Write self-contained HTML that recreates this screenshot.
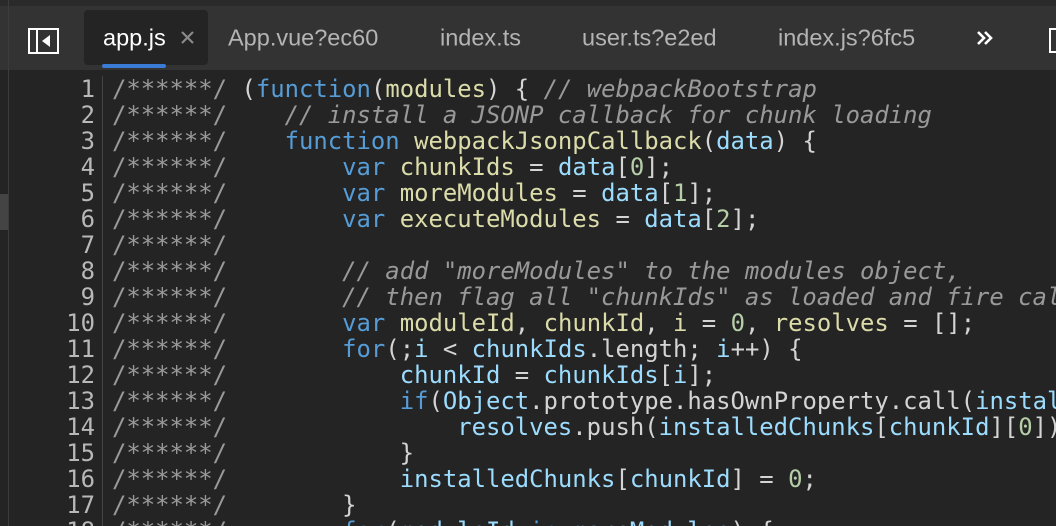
<!DOCTYPE html>
<html style="overflow:hidden;width:1056px;height:526px"><head><meta charset="utf-8"><style>
*{margin:0;padding:0;box-sizing:border-box}
body{width:1056px;height:526px;overflow:hidden;background:#242424;position:relative;font-family:"Liberation Sans",sans-serif}
.top{position:absolute;left:0;top:0;width:1056px;height:6px;background:#2a2a2a}
.bar{position:absolute;left:0;top:6px;width:1056px;height:64px;background:#333333}
.vl{position:absolute;left:8px;top:0;width:1px;height:526px;background:#3c3c3c}
.tab{position:absolute;top:38px;transform:translateY(-50%);font-size:23.5px;color:#b4b4b4;white-space:nowrap}
.act{position:absolute;left:84px;top:10px;width:124px;height:55px;background:#242424;border-radius:4px}
.ul{position:absolute;left:102px;top:64px;width:64px;height:4px;background:#3a7bd5;border-radius:2px}
.wrap{position:absolute;left:0;top:70px;width:1056px;height:456px;overflow:hidden}
.code{position:absolute;left:112px;top:6px;font-family:"DejaVu Sans Mono","Liberation Mono",monospace;font-size:23.9px;line-height:26px;white-space:pre;color:#d4d4d4}
.ln{position:absolute;left:60px;top:6px;width:35px;text-align:right;font-family:"DejaVu Sans Mono",monospace;font-size:23.9px;line-height:26px;color:#b8b8b8;white-space:pre}
.gut{position:absolute;left:102px;top:6px;width:1px;height:450px;background:#444}
.k{color:#569cd6}.f{color:#dcdcaa}.v{color:#9cdcfe}.c{color:#999;font-style:italic}.s{color:#999}.n{color:#b5cea8}
.mk{position:absolute;left:0;top:194px;width:8px;height:36px;background:#444}
</style></head><body>
<div class="top"></div><div class="bar"></div>
<div class="vl"></div><div class="mk"></div>
<svg style="position:absolute;left:28px;top:28px" width="31" height="26"><rect x="1" y="1" width="29" height="24" fill="none" stroke="#fff" stroke-width="2"/><line x1="9" y1="1" x2="9" y2="25" stroke="#fff" stroke-width="2"/><polygon points="22,7 22,19 14,13" fill="#fff"/></svg>
<div class="act"></div><div class="ul"></div>
<div class="tab" style="left:103px;color:#fff">app.js</div>
<svg style="position:absolute;left:181px;top:31px" width="13" height="13"><path d="M1 1L12 12M12 1L1 12" stroke="#8a8a8a" stroke-width="2.2"/></svg>
<div class="tab" style="left:228px">App.vue?ec60</div>
<div class="tab" style="left:440px">index.ts</div>
<div class="tab" style="left:582px">user.ts?e2ed</div>
<div class="tab" style="left:778px">index.js?6fc5</div>
<svg style="position:absolute;left:976px;top:30px" width="18" height="16"><path d="M2 2L8 8L2 14M9 2L15 8L9 14" fill="none" stroke="#fff" stroke-width="2.6"/></svg>
<div style="position:absolute;left:1049px;top:28px;width:10px;height:25px;border:2px solid #fff"></div>
<div class="wrap">
<div class="gut"></div>
<div class="ln">1
2
3
4
5
6
7
8
9
10
11
12
13
14
15
16
17
18</div>
<div class="code"><span class="s">/******/</span> (<span class="k">function</span>(<span class="f">modules</span>) { <span class="c">// webpackBootstrap</span>
<span class="s">/******/</span>    <span class="c">// install a JSONP callback for chunk loading</span>
<span class="s">/******/</span>    <span class="k">function</span> <span class="f">webpackJsonpCallback</span>(<span class="v">data</span>) {
<span class="s">/******/</span>        <span class="k">var</span> <span class="f">chunkIds</span> = <span class="v">data</span>[<span class="n">0</span>];
<span class="s">/******/</span>        <span class="k">var</span> <span class="f">moreModules</span> = <span class="v">data</span>[<span class="n">1</span>];
<span class="s">/******/</span>        <span class="k">var</span> <span class="f">executeModules</span> = <span class="v">data</span>[<span class="n">2</span>];
<span class="s">/******/</span>
<span class="s">/******/</span>        <span class="c">// add "moreModules" to the modules object,</span>
<span class="s">/******/</span>        <span class="c">// then flag all "chunkIds" as loaded and fire callback</span>
<span class="s">/******/</span>        <span class="k">var</span> <span class="f">moduleId</span>, <span class="f">chunkId</span>, <span class="f">i</span> = <span class="n">0</span>, <span class="f">resolves</span> = [];
<span class="s">/******/</span>        <span class="k">for</span>(;<span class="v">i</span> &lt; <span class="v">chunkIds</span>.length; <span class="v">i</span>++) {
<span class="s">/******/</span>            <span class="v">chunkId</span> = <span class="v">chunkIds</span>[<span class="v">i</span>];
<span class="s">/******/</span>            <span class="k">if</span>(<span class="v">Object</span>.prototype.hasOwnProperty.call(<span class="v">installedChunks</span>, <span class="v">chunkId</span>)
<span class="s">/******/</span>                <span class="v">resolves</span>.push(<span class="v">installedChunks</span>[<span class="v">chunkId</span>][<span class="n">0</span>]);
<span class="s">/******/</span>            }
<span class="s">/******/</span>            <span class="v">installedChunks</span>[<span class="v">chunkId</span>] = <span class="n">0</span>;
<span class="s">/******/</span>        }
<span class="s">/******/</span>        <span class="k">for</span>(<span class="v">moduleId</span> <span class="k">in</span> <span class="v">moreModules</span>) {</div>
</div>
</body></html>
